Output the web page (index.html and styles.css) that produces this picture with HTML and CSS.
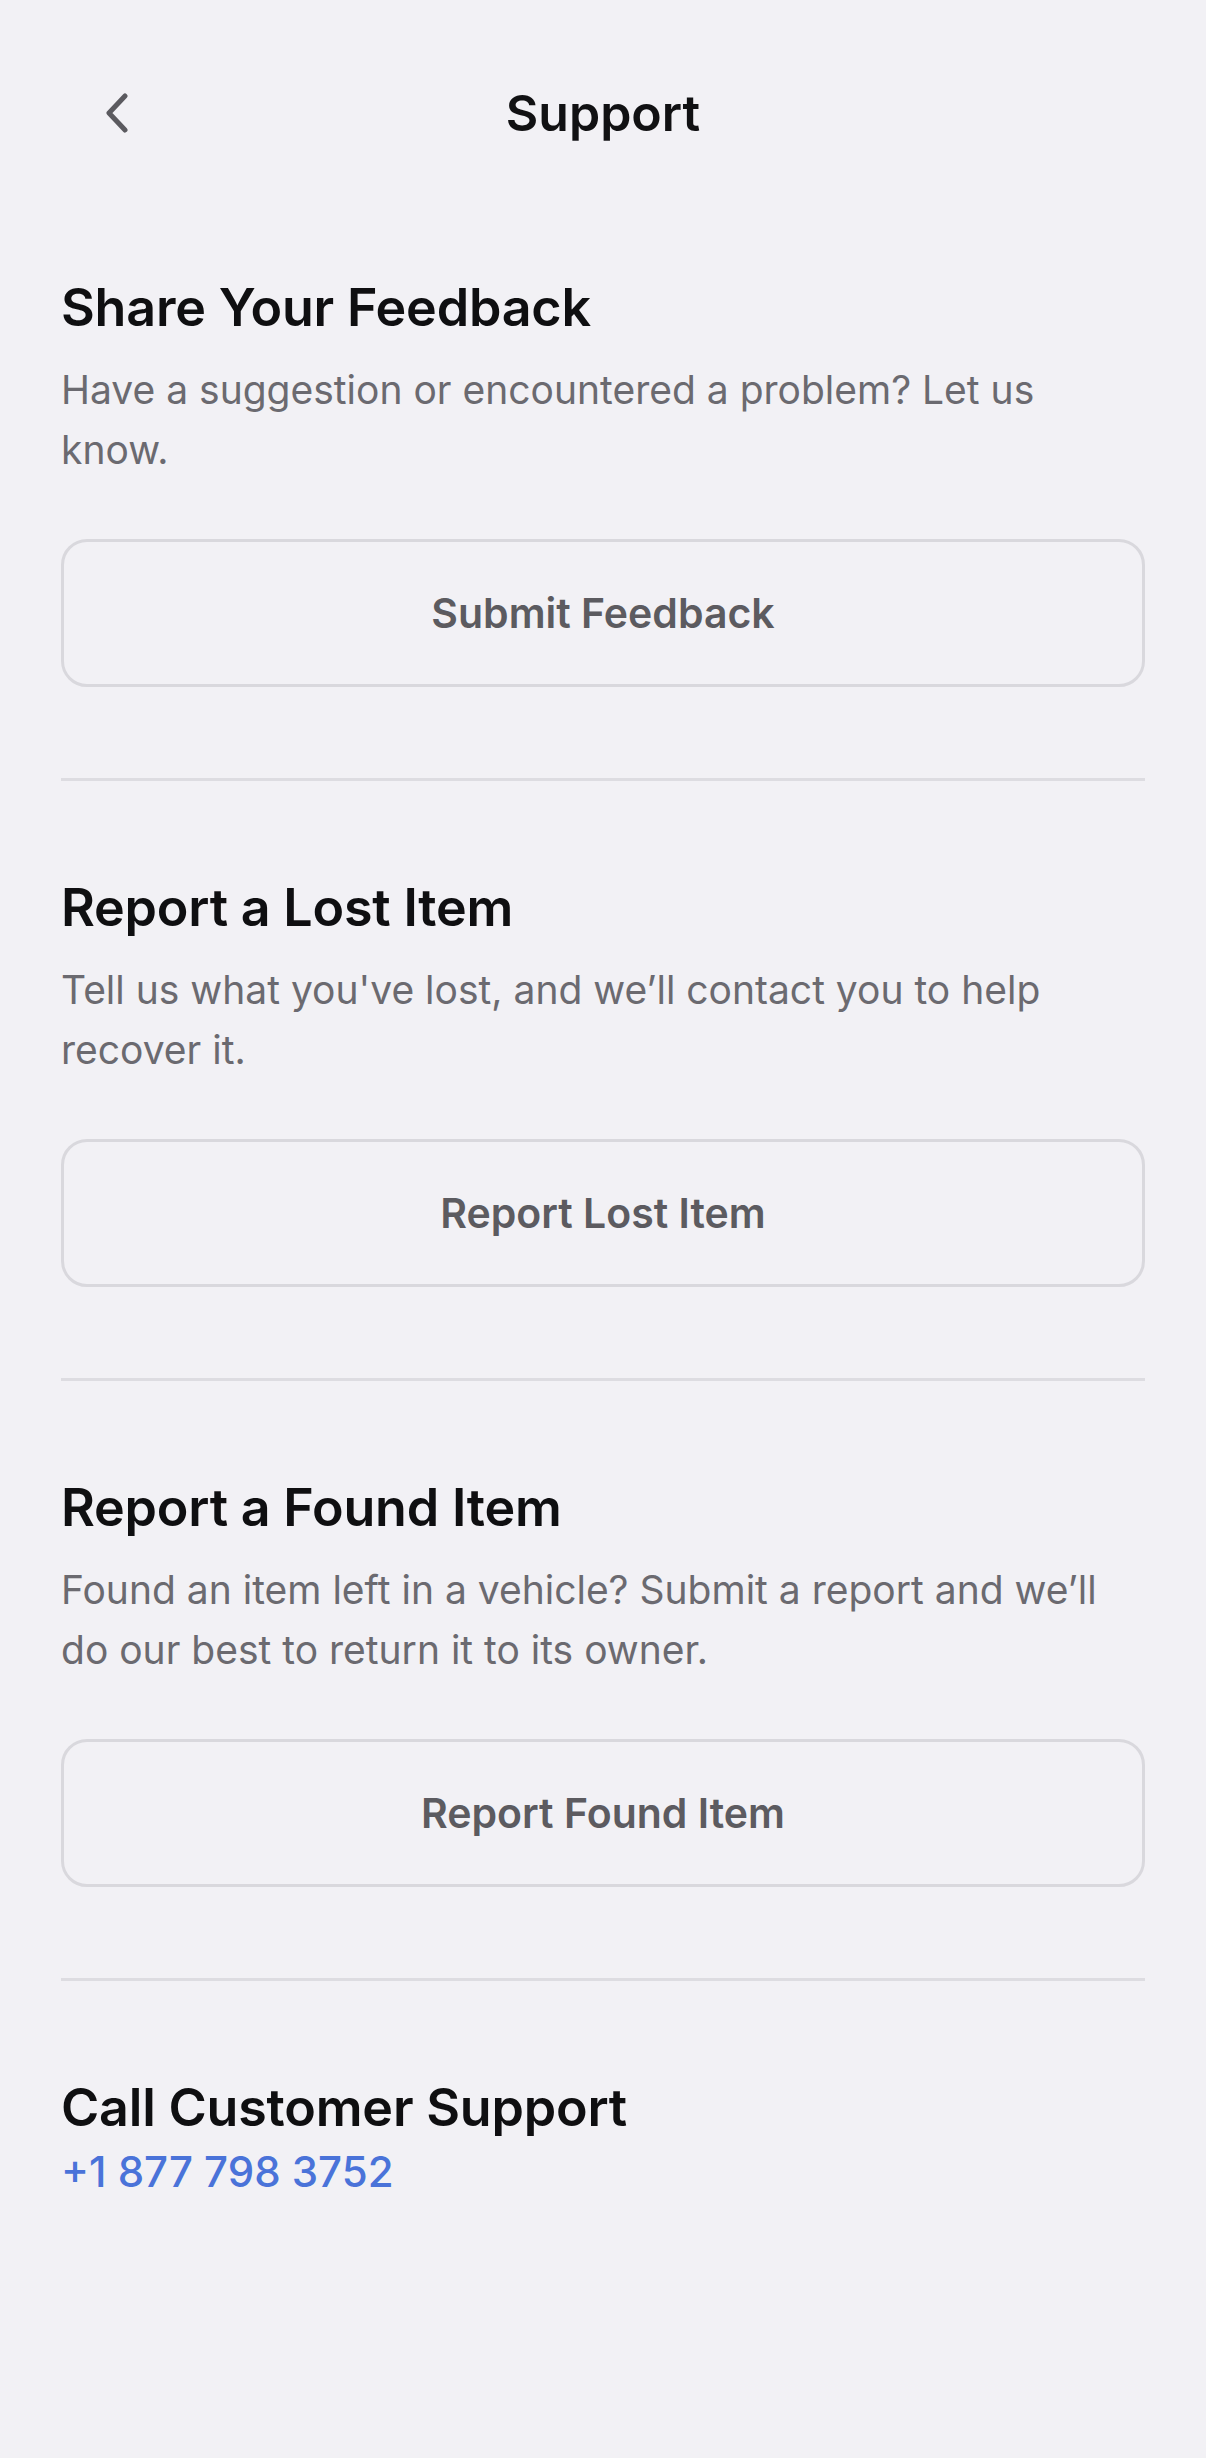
FILE: index.html
```html
<!DOCTYPE html>
<html lang="en">
<head>
  <meta charset="UTF-8" />
  <meta name="viewport" content="width=device-width, initial-scale=1.0"/>
  <title>Support</title>
  <link rel="stylesheet" href="styles.css">
</head>
<body>
  <div class="screen">
    <header class="topbar">
      <button class="back" aria-label="Back">
        <svg width="24" height="40" viewBox="0 0 24 40">
          <path d="M20 3 L4 20 L20 37" fill="none" stroke="#5b5a5f" stroke-width="5" stroke-linecap="round" stroke-linejoin="round"/>
        </svg>
      </button>
      <h1>Support</h1>
      <span></span>
    </header>

    <section class="block">
      <h2>Share Your Feedback</h2>
      <p>Have a suggestion or encountered a problem? Let us know.</p>
      <button class="action">Submit Feedback</button>
    </section>

    <section class="block">
      <h2>Report a Lost Item</h2>
      <p>Tell us what you've lost, and we’ll contact you to help recover it.</p>
      <button class="action">Report Lost Item</button>
    </section>

    <section class="block">
      <h2>Report a Found Item</h2>
      <p>Found an item left in a vehicle? Submit a report and we’ll do our best to return it to its owner.</p>
      <button class="action">Report Found Item</button>
    </section>

    <section class="block last">
      <h2>Call Customer Support</h2>
      <a class="phone" href="tel:+18777983752">+1 877 798 3752</a>
    </section>
  </div>
</body>
</html>
```

FILE: styles.css
```css
* {
  box-sizing: border-box;
}

body {
  margin: 0;
  background: #f2f1f5;
  font-family: Inter, "Noto Sans", sans-serif;
  min-height: 100vh;
}

.screen {
  padding: 0 61px;
}

.topbar {
  height: 181px;
  padding-top: 45px;
  display: grid;
  grid-template-columns: 120px 1fr 120px;
  align-items: center;
}

.back {
  background: none;
  border: none;
  padding: 0;
  margin-left: 44px;
  width: 30px;
  height: 44px;
  display: flex;
  align-items: center;
  cursor: pointer;
}

.topbar h1 {
  margin: 0;
  text-align: center;
  font-size: 50px;
  font-weight: 600;
  color: #111113;
}

.block {
  padding-top: 97px;
  padding-bottom: 91px;
  border-bottom: 3px solid #dddce1;
}

.block h2 {
  margin: 0;
  font-size: 52px;
  line-height: 60px;
  font-weight: 600;
  color: #0f0f11;
  letter-spacing: -0.2px;
}

.block p {
  margin: 22px 0 0;
  font-size: 39px;
  line-height: 60px;
  color: #6b6a70;
}

.action {
  display: block;
  width: 100%;
  height: 148px;
  margin-top: 59px;
  background: transparent;
  border: 3px solid #d9d8dd;
  border-radius: 26px;
  font-family: inherit;
  font-size: 41px;
  font-weight: 600;
  color: #5c5b60;
  cursor: pointer;
}

.block.last {
  border-bottom: none;
}

.phone {
  display: block;
  margin-top: 9px;
  font-size: 42px;
  line-height: 50px;
  font-weight: 500;
  color: #4a73d9;
  text-decoration: none;
}
```
